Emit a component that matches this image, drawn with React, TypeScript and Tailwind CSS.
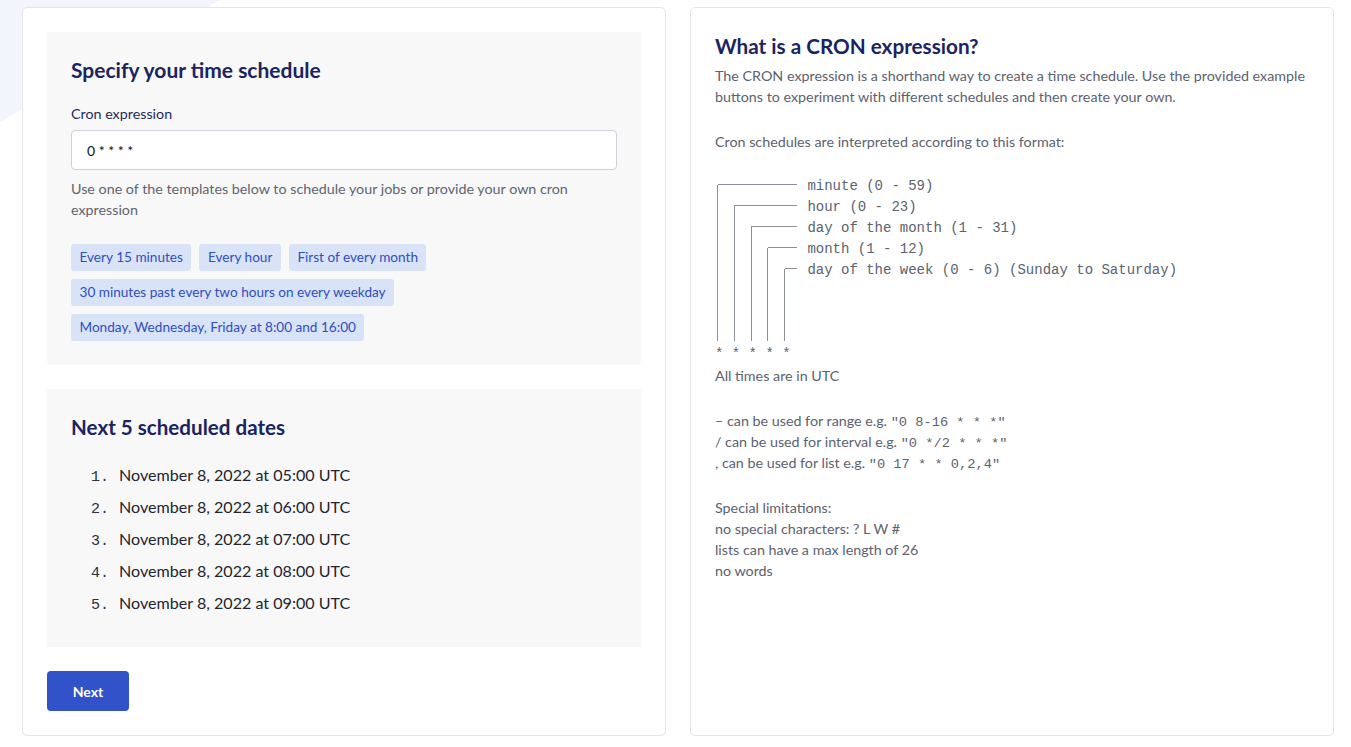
import React from "react";

const chips = [
  ["Every 15 minutes", "Every hour", "First of every month"],
  ["30 minutes past every two hours on every weekday"],
  ["Monday, Wednesday, Friday at 8:00 and 16:00"],
];

const dates = [
  "November 8, 2022 at 05:00 UTC",
  "November 8, 2022 at 06:00 UTC",
  "November 8, 2022 at 07:00 UTC",
  "November 8, 2022 at 08:00 UTC",
  "November 8, 2022 at 09:00 UTC",
];

const labels = [
  "minute (0 - 59)",
  "hour (0 - 23)",
  "day of the month (1 - 31)",
  "month (1 - 12)",
  "day of the week (0 - 6) (Sunday to Saturday)",
  "",
  "",
  "",
];

function TreeLines() {
  const cw = 8.4;
  const lines: React.ReactNode[] = [];
  for (let k = 0; k < 5; k++) {
    const x = 2.5 + 2 * k * cw;
    const y = k * 21 + 8.5;
    lines.push(<line key={"v" + k} x1={x} y1={y} x2={x} y2={165} />);
    lines.push(<line key={"h" + k} x1={x} y1={y} x2={82} y2={y} />);
  }
  return (
    <svg
      className="absolute left-0 top-0"
      width="92"
      height="168"
      viewBox="0 0 92 168"
      stroke="#8a8f9a"
      strokeWidth="1"
      shapeRendering="crispEdges"
    >
      {lines}
    </svg>
  );
}

function Mono({ children }: { children: React.ReactNode }) {
  return (
    <span className="font-['Liberation_Mono',monospace] text-[13.7px] leading-none whitespace-pre">{children}</span>
  );
}

export default function App() {
  return (
    <div className="relative min-h-[747px] bg-white font-['Lato',sans-serif] overflow-hidden">
      <svg className="absolute left-0 top-0" width="240" height="130" viewBox="0 0 240 130">
        <polygon points="0,0 220,0 0,122" fill="#f3f5fc" />
      </svg>
      <div className="relative flex gap-[24px] pl-[22px] pt-[7px]">
        {/* Left card */}
        <div className="w-[644px] h-[729px] border border-[#e3e5e9] rounded-[5px] bg-white p-6 flex flex-col">
          <div className="bg-[#f8f8f8] p-6">
            <h2 className="text-[21px] leading-[28px] font-bold text-[#1b2460]">Specify your time schedule</h2>
            <div className="mt-[20px] text-[14.3px] leading-[20px] text-[#1f2a5c]">Cron expression</div>
            <div className="mt-[6px] h-[40px] bg-white border border-[#cfd2d8] rounded-[4px] flex items-center px-[15px] text-[14px] text-[#111]">
              0 * * * *
            </div>
            <p className="mt-[8px] text-[14.3px] leading-[21px] text-[#5f6470]">
              Use one of the templates below to schedule your jobs or provide your own cron expression
            </p>
            <div className="mt-[24px] flex flex-col gap-[8px]">
              {chips.map((row, i) => (
                <div key={i} className="flex gap-[8px]">
                  {row.map((c) => (
                    <span
                      key={c}
                      className="h-[27px] flex items-center px-[8.5px] rounded-[3px] bg-[#d9e3f8] text-[#2e4ec4] text-[13.6px]"
                    >
                      {c}
                    </span>
                  ))}
                </div>
              ))}
            </div>
          </div>

          <div className="mt-6 bg-[#f8f8f8] px-6 pt-6 pb-[32px]">
            <h2 className="text-[20.6px] leading-[28px] font-bold text-[#1b2460]">Next 5 scheduled dates</h2>
            <ol className="mt-[22px] flex flex-col gap-[8px]">
              {dates.map((d, i) => (
                <li key={i} className="flex items-baseline h-[24px] leading-[24px] pl-[20px]">
                  <span className="w-[28px] font-['Liberation_Mono',monospace] text-[15px] text-[#2a2f3a]">{i + 1}.</span>
                  <span className="text-[16.1px] text-[#1f2430]">{d}</span>
                </li>
              ))}
            </ol>
          </div>

          <div className="mt-6">
            <button className="h-[40px] w-[82px] rounded-[4px] bg-[#3152c9] text-white text-[14px] font-bold">
              Next
            </button>
          </div>
        </div>

        {/* Right card */}
        <div className="w-[644px] h-[729px] border border-[#e3e5e9] rounded-[5px] bg-white px-6 pt-6">
          <h2 className="text-[20.7px] leading-[28px] font-bold text-[#1b2460]">What is a CRON expression?</h2>
          <div className="mt-[5px] text-[14.3px] leading-[21px] text-[#5c6270]">
            <p>
              The CRON expression is a shorthand way to create a time schedule. Use the provided example buttons to
              experiment with different schedules and then create your own.
            </p>
            <div className="h-[24px]" />
            <p>Cron schedules are interpreted according to this format:</p>
            <div className="h-[24px]" />
            <div className="relative font-['Liberation_Mono',monospace] text-[14px] leading-[21px] whitespace-pre text-[#5c6270]">
              <TreeLines />
              {labels.map((l, i) => (
                <div key={i} className="h-[21px] pl-[92.4px]">
                  {l}
                </div>
              ))}
              <div className="h-[21px]">* * * * *</div>
            </div>
            <p>All times are in UTC</p>
            <div className="h-[24px]" />
            <p className="h-[21px]">
              – can be used for range e.g. <Mono>"0 8-16 * * *"</Mono>
            </p>
            <p className="h-[21px]">
              / can be used for interval e.g. <Mono>"0 */2 * * *"</Mono>
            </p>
            <p className="h-[21px]">
              , can be used for list e.g. <Mono>"0 17 * * 0,2,4"</Mono>
            </p>
            <div className="h-[24px]" />
            <p>Special limitations:</p>
            <p>no special characters: ? L W #</p>
            <p>lists can have a max length of 26</p>
            <p>no words</p>
          </div>
        </div>
      </div>
    </div>
  );
}
